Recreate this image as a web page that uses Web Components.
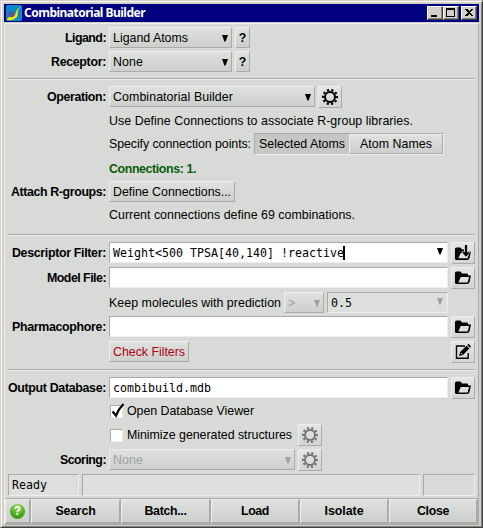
<!DOCTYPE html>
<html lang="en"><head><meta charset="utf-8"><title>Combinatorial Builder</title>
<style>
html,body{margin:0;width:483px;height:528px;overflow:hidden}
body{font:12.4px/16px "Liberation Sans",Arial,sans-serif;color:#000}
</style></head><body>
<mb-window></mb-window>
<script>
const define=(name,html,setup)=>customElements.define(name,class extends HTMLElement{
  connectedCallback(){
    if(this.shadowRoot)return;
    const t=document.createElement('template');t.innerHTML=html;
    this.attachShadow({mode:'open'}).append(t.content.cloneNode(true));
    if(setup)setup(this,this.shadowRoot);
  }
});

// Text whose tracking is adjusted to fill the width in its "w" attribute.
define('mb-text',`<style>:host{display:block;white-space:pre;flex:none}span{display:inline-block}</style><span><slot></slot></span>`,(el,r)=>{
  const w=+el.getAttribute('w'),s=r.querySelector('span');
  if(!w)return;
  const n=el.textContent.length,now=s.getBoundingClientRect().width;
  if(now)s.style.letterSpacing=((w-now)/n)+'px';
});

const icons={
 gear:`<g fill="none" stroke="currentColor"><circle cx="8" cy="8" r="5" stroke-width="2"/><circle cx="8" cy="8" r="7" stroke-width="2.2" stroke-dasharray="2.2 2.198" stroke-dashoffset="1.1"/></g>`,
 folder:`<path d="M0 13V3Q0 1.5 1.5 1.5H5.5L7 3.5H12Q13 3.5 13.3 5.5H16L14.5 12.3Q14 14 12 14H1Z" fill="currentColor"/><path d="M5.8 7H14.1L12.6 12.5H3.3Z" fill="#dfe1de"/>`,
 load:`<path d="M0 14V4Q0 2.5 1.5 2.5H5.5L7 4.5H9V6.5H16L14.5 13.3Q14 15 12 15H1Z" fill="currentColor"/><path d="M5.8 8H14.1L12.6 13.3H3.3Z" fill="#dfe1de"/><path d="M9.2 0H12.8V6.5H16L11 12.6L6 6.5H9.2Z" fill="#dfe1de"/><path d="M9.9 0H12.1V7.2H15L11 11.8L7 7.2H9.9Z" fill="currentColor"/>`,
 edit:`<path d="M10 2H1.5V14.3H13.2V9" fill="none" stroke="currentColor" stroke-width="1.4"/><path d="M4 12L5.2 8L11.5 1.7L14.4 4.6L8 11ZM12.2 1L13 .2Q13.6 0 14 .3L15.7 2Q16 2.5 15.7 3L15 3.8Z" fill="currentColor"/><path d="M6 9L7.2 10.2" stroke="#dfe1de"/>`
};
define('mb-icon',`<style>:host{display:block;width:16px;height:16px;flex:none}svg{display:block}</style><svg width="16" height="16" viewBox="0 0 16 16"></svg>`,(el,r)=>{r.querySelector('svg').innerHTML=icons[el.getAttribute('name')]});

define('mb-arrow',`<style>:host{display:block;width:6px;height:7px;margin:1px -1px 0 auto;flex:none}svg{display:block}</style><svg width="6" height="7"><path d="M0 0H6L3.6 6.5H2.4Z" fill="currentColor"/></svg>`);

define('mb-button',`<style>
:host{box-sizing:border-box;display:flex;align-items:center;width:var(--w);height:var(--h,21px);flex:none;border:1px solid;border-color:#edefec #a9aba8 #a9aba8 #edefec;border-bottom-width:1px;background:linear-gradient(#dfe1de,#cdcfcc);padding:0 4px 0 3px}
:host([center]){justify-content:center;padding:0}
:host([square]){--w:24px;--h:22px;justify-content:center;padding:0;background:linear-gradient(#e4e6e3,#d3d5d2)}
:host([disabled]){color:#a0a2a0}
:host([square][disabled]){color:#737573}
:host([danger]){color:#b00018}
</style><slot></slot>`);

define('mb-field',`<style>
:host{box-sizing:border-box;display:flex;align-items:center;width:var(--w,339px);height:21px;flex:none;border:1px solid;border-color:#a9aba8 #edefec #edefec #a9aba8;background:#fff;padding:0 5px 0 3px;font:11.63px/16px "DejaVu Sans Mono",monospace}
:host([disabled]){background:#dddfdc;--arrow:#a0a2a0}
mb-arrow{color:var(--arrow,#000);margin-bottom:3px}
i{width:2px;height:14px;background:#000;flex:none;margin-left:-1px}
</style><slot></slot>`,(el,r)=>{
 if(el.hasAttribute('caret'))r.append(document.createElement('i'));
 if(el.hasAttribute('drop'))r.append(document.createElement('mb-arrow'));
});

define('mb-row',`<style>
:host{display:grid;grid-template-columns:101px 1fr;column-gap:3px;margin-top:var(--t);height:var(--h,22px)}
.label{display:flex;justify-content:flex-end;font-weight:bold;padding-top:3px;height:16px}
.body{display:flex;gap:3px;align-items:flex-start}
</style><div class="label"><slot name="label"></slot></div><div class="body"><slot></slot></div>`);

define('mb-rule',`<style>:host{display:block;height:1px;margin:var(--t) 3px 0;border-top:1px solid #a9aba8;background:#edefec}</style>`);

define('mb-toggle',`<style>
:host{box-sizing:border-box;display:flex;width:190px;height:22px;border:1px solid;border-color:#a9aba8 #edefec #edefec #a9aba8;flex:none}
.on{width:94px;background:#c5c7c4;display:flex;justify-content:center;align-items:center}
mb-button{--w:94px;--h:20px}
</style><div class="on"><slot name="on"></slot></div><mb-button center><slot></slot></mb-button>`);

define('mb-check',`<style>
:host{display:flex;gap:4px;height:16px;padding-left:1px;align-items:center}
.box{box-sizing:border-box;width:13px;height:13px;border:1px solid;border-color:#a9aba8 #edefec #edefec #a9aba8;background:#fff;flex:none}
svg{display:none;overflow:visible}:host([checked]) svg{display:block}
</style><div class="box"><svg width="11" height="11"><path d="M1.5 5.5L5 9.5Q7.5 3 12.5 -2" fill="none" stroke="#000" stroke-width="2.3"/></svg></div><slot></slot>`);

define('mb-titlebar',`<style>
:host{display:flex;height:18px;background:#000080;color:#fff;align-items:center;font:bold 12px/16px "Noto Sans","Open Sans",sans-serif}
.logo{margin:0 2px 0 2px;flex:none}
.btns{display:flex;margin:0 2px 0 auto}
b{box-sizing:border-box;display:block;width:16px;height:14px;background:#d4d0c8;border:1px solid;border-color:#fff #404040 #404040 #fff;box-shadow:inset -1px -1px #808080}
b:last-child{margin-left:2px}
svg{display:block}
</style><svg class="logo" width="16" height="16"><rect width="16" height="16" rx="1.5" fill="#0789c5"/><path d="M15.5 1L11 4.5L8.5 11L2 12.5L1 15Q9 16 11.5 11L12 5Z" fill="#ffe000"/><circle cx="5.3" cy="9.3" r="3" fill="#66529e"/></svg><slot></slot>
<div class="btns"><b><svg width="14" height="12"><path d="M3 8H9V10H3Z"/></svg></b><b><svg width="14" height="12"><path d="M2 1H11V10H2ZM3 3V9H10V3Z" fill-rule="evenodd"/></svg></b><b><svg width="14" height="12" shape-rendering="crispEdges"><path d="M3 2H5L7 4L9 2H11L8 5.5L11 9H9L7 7L5 9H3L6 5.5Z"/></svg></b></div>`);

define('mb-status',`<style>
:host{display:grid;grid-template-columns:71px 338px 52px;gap:3px;margin:var(--t) 3px 0;height:21px;font:11.63px/16px "DejaVu Sans Mono",monospace}
div{box-sizing:border-box;border:1px solid;border-color:#a9aba8 #edefec #edefec #a9aba8;background:#dddfdc;padding:2px 3px}
div:last-child{background:#d8dad7}
</style><div><slot></slot></div><div></div><div></div>`);

define('mb-footer',`<style>
:host{display:grid;grid-template-columns:26px 90px 90px 89px 89px 89px;height:25px;margin-top:var(--t);border-top:1px solid #a9aba8;font-weight:bold}
::slotted(*){box-sizing:border-box;display:flex;align-items:center;justify-content:center;border:1px solid;border-width:1px 2px 2px 1px;border-color:#edefec #a9aba8 #a9aba8 #edefec;background:linear-gradient(#dfe1de,#cdcfcc)}
</style><slot></slot>`);

define('mb-help',`<style>:host{display:block}div{width:15px;height:15px;border-radius:50%;background:radial-gradient(circle at 50% 20%,#a5dc62,#4cad20 55%,#2f8f10);color:#fff;font:bold 12px/15px "Liberation Sans",sans-serif;text-align:center}</style><div>?</div>`);

define('mb-window',`<style>
:host{box-sizing:border-box;display:block;width:483px;height:528px;background:#d4d0c8;border:1px solid;border-color:#d4d0c8 #404040 #404040 #d4d0c8;box-shadow:inset 1px 1px #fff,inset -1px -1px #808080;padding:3px}
main{box-sizing:border-box;width:475px;height:502px;margin-top:1px;background:#d8dad7;border:1px solid;border-color:#edefec #a9aba8 #a9aba8 #edefec;display:flow-root}
.n{padding-top:3px}.q{font-weight:bold}
.green{color:#0b5c0b;font-weight:bold}
</style>
<mb-titlebar><mb-text w="121">Combinatorial Builder</mb-text></mb-titlebar>
<main>
<mb-row style="--t:3px;--h:21px"><mb-text slot="label" w="41">Ligand:</mb-text><mb-button style="--w:123px"><mb-text w="75">Ligand Atoms</mb-text><mb-arrow></mb-arrow></mb-button><mb-button center class="q" style="--w:15px">?</mb-button></mb-row>
<mb-row style="--t:3px;--h:21px"><mb-text slot="label" w="55">Receptor:</mb-text><mb-button style="--w:123px"><mb-text w="30">None</mb-text><mb-arrow></mb-arrow></mb-button><mb-button center class="q" style="--w:15px">?</mb-button></mb-row>
<mb-rule style="--t:6px"></mb-rule>
<mb-row style="--t:6px"><mb-text slot="label" w="59">Operation:</mb-text><mb-button style="--w:206px"><mb-text w="120">Combinatorial Builder</mb-text><mb-arrow></mb-arrow></mb-button><mb-button square><mb-icon name="gear"></mb-icon></mb-button></mb-row>
<mb-row style="--t:5px;--h:16px"><mb-text w="304">Use Define Connections to associate R-group libraries.</mb-text></mb-row>
<mb-row style="--t:4px"><mb-text class="n" w="142">Specify connection points:</mb-text><mb-toggle><mb-text slot="on" w="86">Selected Atoms</mb-text><mb-text w="72">Atom Names</mb-text></mb-toggle></mb-row>
<mb-row style="--t:6px;--h:16px"><mb-text class="green" w="87">Connections: 1.</mb-text></mb-row>
<mb-row style="--t:4px;--h:21px"><mb-text slot="label" w="95">Attach R-groups:</mb-text><mb-button style="--w:126px"><mb-text w="118">Define Connections...</mb-text></mb-button></mb-row>
<mb-row style="--t:5px;--h:16px"><mb-text w="246">Current connections define 69 combinations.</mb-text></mb-row>
<mb-rule style="--t:11px"></mb-rule>
<mb-row style="--t:6px"><mb-text slot="label" w="94">Descriptor Filter:</mb-text><mb-field caret drop><mb-text w="231">Weight&lt;500 TPSA[40,140] !reactive</mb-text></mb-field><mb-button square><mb-icon name="load"></mb-icon></mb-button></mb-row>
<mb-row style="--t:3px"><mb-text slot="label" w="59">Model File:</mb-text><mb-field></mb-field><mb-button square><mb-icon name="folder"></mb-icon></mb-button></mb-row>
<mb-row style="--t:3px;--h:21px"><mb-text class="n" w="172">Keep molecules with prediction</mb-text><mb-button disabled style="--w:40px"><mb-text>&gt;</mb-text><mb-arrow></mb-arrow></mb-button><mb-field disabled drop style="--w:121px"><mb-text w="21">0.5</mb-text></mb-field></mb-row>
<mb-row style="--t:3px"><mb-text slot="label" w="94">Pharmacophore:</mb-text><mb-field></mb-field><mb-button square><mb-icon name="folder"></mb-icon></mb-button></mb-row>
<mb-row style="--t:3px"><mb-button danger style="--w:80px"><mb-text w="72">Check Filters</mb-text></mb-button><mb-button square style="margin-left:auto;margin-right:3px"><mb-icon name="edit"></mb-icon></mb-button></mb-row>
<mb-rule style="--t:6px"></mb-rule>
<mb-row style="--t:6px"><mb-text slot="label" w="98">Output Database:</mb-text><mb-field><mb-text w="98">combibuild.mdb</mb-text></mb-field><mb-button square><mb-icon name="folder"></mb-icon></mb-button></mb-row>
<mb-row style="--t:4px;--h:16px"><mb-check checked><mb-text w="127">Open Database Viewer</mb-text></mb-check></mb-row>
<mb-row style="--t:5px"><mb-check style="padding-top:3px"><mb-text w="165">Minimize generated structures</mb-text></mb-check><mb-button square disabled style="margin-left:3px"><mb-icon name="gear"></mb-icon></mb-button></mb-row>
<mb-row style="--t:3px"><mb-text slot="label" w="46">Scoring:</mb-text><mb-button disabled style="--w:186px"><mb-text w="30">None</mb-text><mb-arrow></mb-arrow></mb-button><mb-button square disabled><mb-icon name="gear"></mb-icon></mb-button></mb-row>
<mb-status style="--t:3px"><mb-text w="35">Ready</mb-text></mb-status>
<mb-footer style="--t:3px"><div><mb-help></mb-help></div><div><mb-text w="40">Search</mb-text></div><div><mb-text w="42">Batch...</mb-text></div><div><mb-text w="28">Load</mb-text></div><div><mb-text w="39">Isolate</mb-text></div><div><mb-text w="32">Close</mb-text></div></mb-footer>
</main>`);
</script></body></html>
